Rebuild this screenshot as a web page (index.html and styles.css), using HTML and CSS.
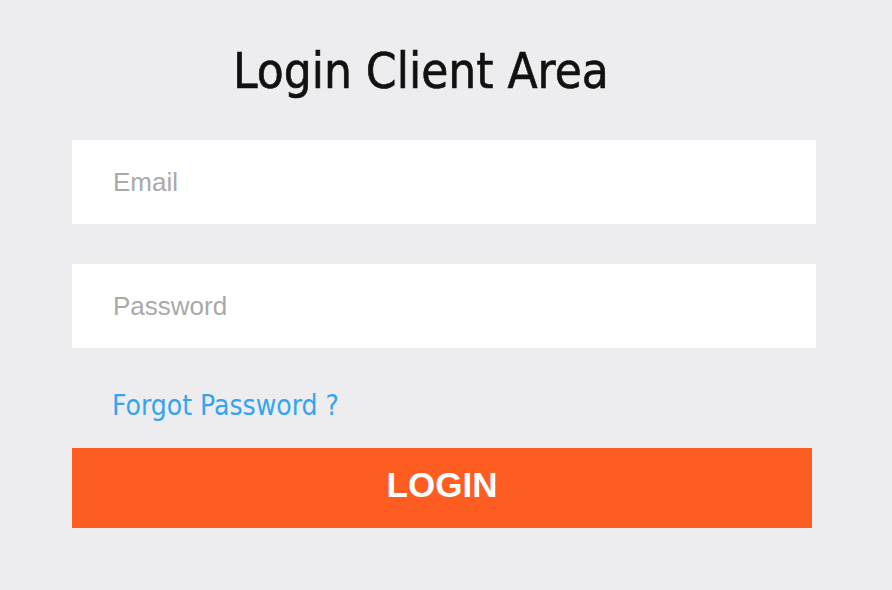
FILE: index.html
```html
<!DOCTYPE html>
<html lang="en">
<head>
<meta charset="utf-8">
<title>Login Client Area</title>
<link rel="stylesheet" href="styles.css">
</head>
<body>
<main class="login">
  <h1 class="login-title">Login Client Area</h1>
  <form class="login-form">
    <input class="field" type="email" placeholder="Email">
    <input class="field" type="password" placeholder="Password">
    <a class="forgot" href="#">Forgot Password ?</a>
    <button class="login-btn" type="button">LOGIN</button>
  </form>
</main>
</body>
</html>
```
FILE: styles.css
```css
html, body {
  margin: 0;
  padding: 0;
  background: #ededef;
}
body {
  width: 892px;
  height: 590px;
  overflow: hidden;
}
.login {
  padding: 42px 0 0 72px;
}
.login-title {
  margin: 0 0 38px 0;
  padding-left: 161px;
  font-family: "DejaVu Sans Condensed", "DejaVu Sans", sans-serif;
  font-stretch: condensed;
  font-weight: normal;
  font-size: 49px;
  line-height: 60px;
  height: 60px;
  color: #111111;
  -webkit-text-stroke: 0.6px #111111;
}
.login-form {
  display: flex;
  flex-direction: column;
  align-items: flex-start;
}
.field {
  box-sizing: border-box;
  width: 744px;
  height: 84px;
  margin: 0 0 40px 0;
  padding: 0 0 0 41px;
  border: none;
  outline: none;
  background: #ffffff;
  font-family: "Liberation Sans", Arial, sans-serif;
  font-size: 26px;
  color: #333;
}
.field + .field {
  margin-bottom: 38px;
}
.field::placeholder {
  color: #a9a9a9;
  opacity: 1;
}
.forgot {
  display: block;
  padding-left: 40px;
  height: 40px;
  line-height: 40px;
  font-family: "DejaVu Sans Condensed", "DejaVu Sans", sans-serif;
  font-stretch: condensed;
  font-size: 28px;
  color: #35a4ef;
  text-decoration: none;
  margin-bottom: 22px;
}
.login-btn {
  box-sizing: border-box;
  width: 740px;
  height: 80px;
  padding: 0 0 6px 0;
  border: none;
  background: #fe5d22;
  color: #ffffff;
  font-family: "Liberation Sans", Arial, sans-serif;
  font-weight: bold;
  font-size: 35px;
  cursor: pointer;
}
```
